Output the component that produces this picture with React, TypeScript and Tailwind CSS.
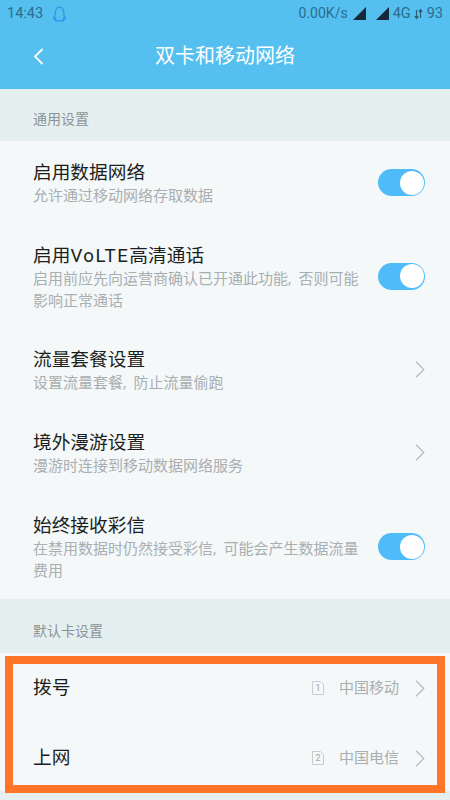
const cjk = "font-['Roboto','Noto_Sans_CJK_SC',sans-serif]";

function Toggle() {
  return (
    <div className="flex h-[27px] w-[47px] shrink-0 items-center justify-end rounded-full bg-[#4fbcf9] pr-[1.5px]">
      <div className="h-6 w-6 rounded-full bg-white" />
    </div>
  );
}

function Chevron() {
  return (
    <svg className="h-[17px] w-[10px] shrink-0" viewBox="0 0 10 17" fill="none" stroke="#b4b9bb" strokeWidth="1.2">
      <path d="M1 .8 8.800 8.500 1 16.200" />
    </svg>
  );
}

function SimIcon({ slot }: { slot: string }) {
  return (
    <div className="relative mr-[15px] h-[14px] w-[12px] shrink-0">
      <svg className="absolute inset-0 h-full w-full" viewBox="0 0 12 14" fill="none" stroke="#c8cdcf" strokeWidth="1">
        <path d="M.5.5h8l3 3v10H.5Z" />
      </svg>
      <div className="absolute inset-0 flex items-center justify-center text-[9px] leading-none text-[#a2a7a9]">{slot}</div>
    </div>
  );
}

interface RowProps {
  title: React.ReactNode;
  sub: string[];
  action: 'toggle' | 'chevron';
  height: string;
}

function Row({ title, sub, action, height }: RowProps) {
  return (
    <div className={`flex items-center justify-between pl-[33px] pr-[25px] ${height}`}>
      <div className="self-start pt-[20px]">
        <div className="text-[18.700px] leading-[24px] text-[#1c1f20]">{title}</div>
        {sub.map((s) => (
          <div key={s} className="text-[15px] leading-[22px] text-[#a9aeb0]">{s}</div>
        ))}
      </div>
      {action === 'toggle' ? <Toggle /> : <Chevron />}
    </div>
  );
}

function SimRow({ title, slot, carrier }: { title: string; slot: string; carrier: string }) {
  return (
    <div className="flex h-[70px] items-center pl-[33px] pr-[25px]">
      <div className="flex-1 text-[18.700px] text-[#1c1f20]">{title}</div>
      <SimIcon slot={slot} />
      <div className="mr-[16px] text-[15px] text-[#a9aeb0]">{carrier}</div>
      <Chevron />
    </div>
  );
}

export default function App() {
  return (
    <div className={`relative h-[800px] w-[450px] overflow-hidden bg-[#e6eff0] ${cjk}`}>
      {/* status bar + title */}
      <div className="h-[89px] bg-[#55c0ef]">
        <div className="flex h-[27px] items-center px-[7px] text-[14.500px] text-[#2c6c8e]">
          <span>14:43</span>
          <svg className="ml-[9px] h-[16px] w-[15px]" viewBox="0 0 15 16" fill="none" stroke="#2a8fe6" strokeWidth="1.1">
            <path d="M3 9.500C3 4 4.500 1 7.500 1S12 4 12 9.500c1 1.200 1.600 2.600 1.200 3.600-.5-.2-1-.7-1.300-1.200-.2.900-.6 1.500-1 1.900.6.300 1 .6.900 1-.8.300-3.100.300-4.300-.3-1.200.6-3.500.6-4.300.3-.1-.4.300-.7.900-1-.4-.4-.8-1-1-1.900-.3.500-.8 1-1.300 1.200C1.400 12.100 2 10.700 3 9.500Z" />
          </svg>
          <span className="ml-auto text-[14px]">0.00K/s</span>
          <svg className="ml-[5px] h-[13px] w-[13px]" viewBox="0 0 13 13" fill="#16293a"><path d="M13 0v13H0Z" /></svg>
          <svg className="ml-[10px] h-[13px] w-[13px]" viewBox="0 0 13 13" fill="#16293a"><path d="M13 0v13H0Z" /></svg>
          <span className="ml-[4px]">4G</span>
          <svg className="ml-[3px] h-[12px] w-[9px]" viewBox="0 0 9 12" fill="none" stroke="#2c5a75" strokeWidth="1.200">
            <path d="M2.500 2v8M.8 8l1.700 2.400L4.200 8M6.500 10V2M4.800 4l1.700-2.400L8.200 4" />
          </svg>
          <span className="ml-[4px]">93</span>
        </div>
        <div className="relative flex h-[62px] items-center justify-center pb-[4px] text-[20px] text-white">
          <svg className="absolute left-[33px] top-[21px] h-[17px] w-[11px]" viewBox="0 0 11 17" fill="none" stroke="#ffffff" strokeWidth="1.800">
            <path d="M9.500 1 2 8.500 9.500 16" />
          </svg>
          <span>双卡和移动网络</span>
        </div>
      </div>

      <div className="flex h-[52px] items-end pb-[12px] pl-[33px] text-[14px] leading-[20px] text-[#8c9394]">通用设置</div>
      <div className="bg-[#f4f8f9]">
        <Row title="启用数据网络" sub={['允许通过移动网络存取数据']} action="toggle" height="h-[83px]" />
        <Row
          title={<>启用<span className="tracking-[1.500px]">VoLTE</span>高清通话</>}
          sub={['启用前应先向运营商确认已开通此功能,\u2002否则可能', '影响正常通话']}
          action="toggle"
          height="h-[104px]"
        />
        <Row title="流量套餐设置" sub={['设置流量套餐,\u2002防止流量偷跑']} action="chevron" height="h-[83px]" />
        <Row title="境外漫游设置" sub={['漫游时连接到移动数据网络服务']} action="chevron" height="h-[83px]" />
        <Row title="始终接收彩信" sub={['在禁用数据时仍然接受彩信,\u2002可能会产生数据流量', '费用']} action="toggle" height="h-[105px]" />
      </div>

      <div className="flex h-[54px] items-end pb-[12px] pl-[33px] text-[14px] leading-[20px] text-[#8c9394]">默认卡设置</div>
      <div className="h-[138px] bg-[#f4f8f9]">
        <SimRow title="拨号" slot="1" carrier="中国移动" />
        <SimRow title="上网" slot="2" carrier="中国电信" />
      </div>

      {/* annotation frame */}
      <div className="absolute left-[5px] top-[656px] h-[137px] w-[440px] border-[8px] border-[#fe7429]" />
    </div>
  );
}
